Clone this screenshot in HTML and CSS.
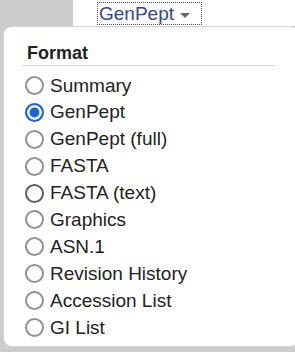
FILE: index.html
```html
<!DOCTYPE html>
<html lang="en">
<head>
    <meta charset="UTF-8">
    <title>Format</title>
    <link rel="stylesheet" href="styles.css">
</head>
<body>
    <div class="top-bar">
        <div class="side"></div>
        <div class="tabs">
            <a class="menu-link" href="#">GenPept<span class="caret"></span></a>
        </div>
    </div>
    <div class="page">
        <div class="popup">
            <div class="popup-title">Format</div>
            <ul class="options">
                <li><label><input type="radio" name="format">Summary</label></li>
                <li><label><input type="radio" name="format" checked>GenPept</label></li>
                <li><label><input type="radio" name="format">GenPept (full)</label></li>
                <li><label><input type="radio" name="format">FASTA</label></li>
                <li><label><input type="radio" name="format" class="hover">FASTA (text)</label></li>
                <li><label><input type="radio" name="format">Graphics</label></li>
                <li><label><input type="radio" name="format">ASN.1</label></li>
                <li><label><input type="radio" name="format">Revision History</label></li>
                <li><label><input type="radio" name="format">Accession List</label></li>
                <li><label><input type="radio" name="format">GI List</label></li>
            </ul>
        </div>
    </div>
</body>
</html>
```

FILE: styles.css
```css
body {
    margin: 0;
    font-family: 'Liberation Sans', Arial, sans-serif;
    color: #222;
    background-color: #cccccc;
    width: 295px;
    height: 352px;
    overflow: hidden;
}
.top-bar {
    display: flex;
    height: 26px;
}
.side {
    width: 73px;
    background-color: #cccccc;
}
.tabs {
    flex: 1;
    background-color: #fff;
    padding: 2px 0 0 24px;
}
.menu-link {
    display: inline-flex;
    align-items: center;
    height: 21px;
    width: 102px;
    border: 1px dotted #555;
    font-size: 19px;
    color: #33478a;
    text-decoration: none;
    padding-left: 1px;
    box-sizing: content-box;
}
.caret {
    width: 0;
    height: 0;
    margin: 3px 0 0 6px;
    border-left: 5px solid transparent;
    border-right: 5px solid transparent;
    border-top: 5px solid #666;
}
.page {
    padding: 0 0 4px 3px;
}
.popup {
    width: 296px;
    height: 321px;
    box-sizing: border-box;
    background-color: #fff;
    border: 1px solid #d6d6d6;
    border-radius: 9px;
    padding-top: 16px;
}
.popup-title {
    margin: 0 0 0 18px;
    width: 249px;
    padding: 0 0 2px 5px;
    font-size: 18px;
    font-weight: bold;
    line-height: 20px;
    color: #222;
    border-bottom: 1px solid #dcdcdc;
}
.options {
    list-style: none;
    margin: 6px 0 0 0;
    padding: 0 0 0 21px;
}
.options li {
    height: 26.9px;
}
.options label {
    display: flex;
    align-items: center;
    height: 27px;
    font-size: 19px;
    color: #222;
}
.options input {
    appearance: none;
    -webkit-appearance: none;
    width: 19px;
    height: 19px;
    margin: 0 6px 0 0;
    box-sizing: border-box;
    border: 2.5px solid #919191;
    border-radius: 50%;
    background-color: #fff;
}
.options input.hover {
    border-color: #5e5e5e;
}
.options input:checked {
    border-color: #1766d6;
    background-color: #1766d6;
    box-shadow: inset 0 0 0 2.5px #fff;
}
```
